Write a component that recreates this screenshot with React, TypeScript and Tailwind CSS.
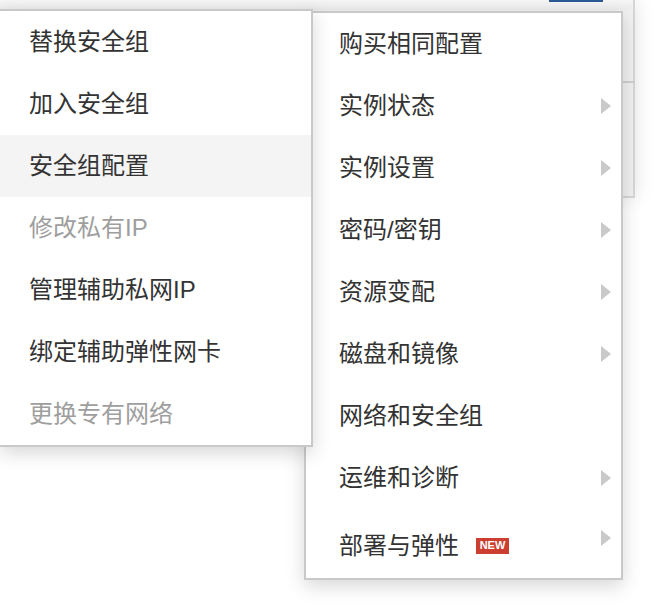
import React from "react";

const leftItems: { label: string; disabled?: boolean; active?: boolean }[] = [
  { label: "替换安全组" },
  { label: "加入安全组" },
  { label: "安全组配置", active: true },
  { label: "修改私有IP", disabled: true },
  { label: "管理辅助私网IP" },
  { label: "绑定辅助弹性网卡" },
  { label: "更换专有网络", disabled: true },
];

const rightItems: { label: string; arrow?: boolean }[] = [
  { label: "购买相同配置" },
  { label: "实例状态", arrow: true },
  { label: "实例设置", arrow: true },
  { label: "密码/密钥", arrow: true },
  { label: "资源变配", arrow: true },
  { label: "磁盘和镜像", arrow: true },
  { label: "网络和安全组" },
  { label: "运维和诊断", arrow: true },
];

function Arrow({ className = "" }: { className?: string }) {
  return (
    <svg width="10" height="16" viewBox="0 0 10 16" className={className}>
      <path d="M0 0 L10 8 L0 16 Z" fill="#c9c9c9" />
    </svg>
  );
}

export default function App() {
  return (
    <div
      className="relative w-[660px] h-[608px] overflow-hidden bg-white text-[#333]"
      style={{ fontFamily: '"Liberation Sans", "Noto Sans CJK SC", sans-serif' }}
    >
      {/* page behind */}
      <div className="absolute left-0 top-0 w-[635px] h-[198px] bg-[#f1f1f1] border-r-2 border-b-2 border-[#d6d6d6] shadow-[4px_0_16px_rgba(0,0,0,0.08)]">
        <div className="h-[10px] bg-gradient-to-b from-[#f6f6f6] to-[#ececec] relative">
          <div className="absolute left-[549px] top-0 w-[54px] h-[2px] bg-[#2d5a95]" />
        </div>
        <div className="absolute left-[600px] top-[81px] w-[35px] h-[2px] bg-[#d0d0d0]" />
      </div>

      {/* right menu */}
      <div className="absolute left-[304px] top-[11px] w-[319px] bg-white border-2 border-[#c9c9c9] shadow-[0_6px_18px_rgba(0,0,0,0.16)]">
        {rightItems.map((it) => (
          <div key={it.label} className="h-[62px] flex items-center justify-between pl-[33px] pr-[10px] text-[24px] leading-none">
            <span>{it.label}</span>
            {it.arrow && <Arrow />}
          </div>
        ))}
        <div className="h-[69px] flex items-center justify-between pl-[33px] pr-[10px] text-[24px] leading-none">
          <span className="flex items-center translate-y-[2px]">
            部署与弹性
            <span className="ml-[17px] bg-[#cc3f30] text-white text-[11px] font-bold w-[33px] h-[16px] flex items-center justify-center leading-none">
              NEW
            </span>
          </span>
          <Arrow className="-translate-y-[6px]" />
        </div>
      </div>

      {/* left menu */}
      <div className="absolute left-0 top-[9px] w-[313px] bg-white border-t-2 border-r-2 border-b-2 border-[#c9c9c9] shadow-[0_6px_18px_rgba(0,0,0,0.16)]">
        {leftItems.map((it, i) => (
          <div
            key={it.label}
            className={`h-[62px] flex items-center pl-[29px] text-[24px] leading-none ${
              it.active ? "bg-[#f4f4f4]" : ""
            } ${it.disabled ? "text-[#9e9e9e]" : "text-[#333]"} ${i === 6 ? "h-[61px]" : ""}`}
          >
            {it.label}
          </div>
        ))}
      </div>
    </div>
  );
}
